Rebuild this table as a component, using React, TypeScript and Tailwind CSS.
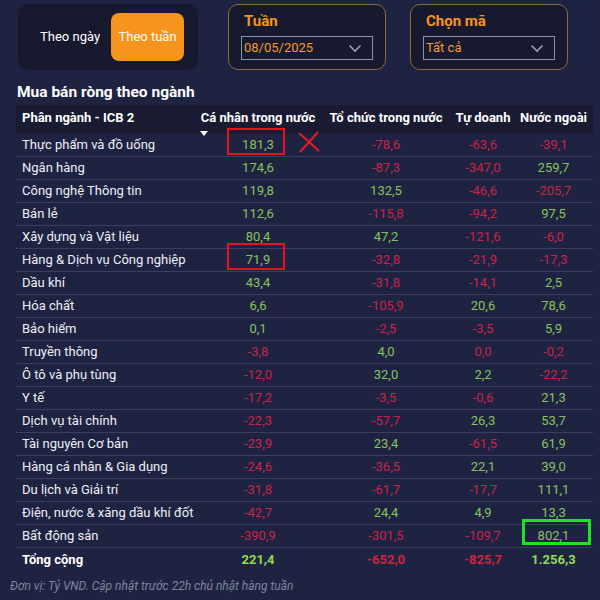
import React from "react";

type Row = { name: string; v: number[] };

const ROWS: Row[] = [
  { name: "Thực phẩm và đồ uống", v: [181.3, -78.6, -63.6, -39.1] },
  { name: "Ngân hàng", v: [174.6, -87.3, -347.0, 259.7] },
  { name: "Công nghệ Thông tin", v: [119.8, 132.5, -46.6, -205.7] },
  { name: "Bán lẻ", v: [112.6, -115.8, -94.2, 97.5] },
  { name: "Xây dựng và Vật liệu", v: [80.4, 47.2, -121.6, -6.0] },
  { name: "Hàng & Dịch vụ Công nghiệp", v: [71.9, -32.8, -21.9, -17.3] },
  { name: "Dầu khí", v: [43.4, -31.8, -14.1, 2.5] },
  { name: "Hóa chất", v: [6.6, -105.9, 20.6, 78.6] },
  { name: "Bảo hiểm", v: [0.1, -2.5, -3.5, 5.9] },
  { name: "Truyền thông", v: [-3.8, 4.0, 0.0, -0.2] },
  { name: "Ô tô và phụ tùng", v: [-12.0, 32.0, 2.2, -22.2] },
  { name: "Y tế", v: [-17.2, -3.5, -0.6, 21.3] },
  { name: "Dịch vụ tài chính", v: [-22.3, -57.7, 26.3, 53.7] },
  { name: "Tài nguyên Cơ bản", v: [-23.9, 23.4, -61.5, 61.9] },
  { name: "Hàng cá nhân & Gia dụng", v: [-24.6, -36.5, 22.1, 39.0] },
  { name: "Du lịch và Giải trí", v: [-31.8, -61.7, -17.7, 111.1] },
  { name: "Điện, nước & xăng dầu khí đốt", v: [-42.7, 24.4, 4.9, 13.3] },
  { name: "Bất động sản", v: [-390.9, -301.5, -109.7, 802.1] },
];

const TOTAL = ["221,4", "-652,0", "-825,7", "1.256,3"];

const fmt = (n: number) => {
  const s = Math.abs(n).toFixed(1).replace(".", ",");
  return n < 0 ? "-" + s : s;
};

const color = (n: number) => (n > 0 ? "text-[#86c35a]" : "text-[#c92345]");

const Chevron = () => (
  <svg width="14" height="9" viewBox="0 0 14 9" fill="none">
    <path d="M1.5 1.5 L7 7 L12.5 1.5" stroke="#9aa0b8" strokeWidth="1.6" />
  </svg>
);

function Picker({ label, value }: { label: string; value: string }) {
  return (
    <div className="w-[158px] h-[66px] rounded-[10px] border border-[#8a6b40] bg-[#171a2f] px-[12px] pt-[7px]">
      <div className="text-[15px] font-bold text-[#f7941d] leading-[18px] pl-[3px]">{label}</div>
      <div className="mt-[6px] h-[24px] border-[1.5px] border-[#8b93b5] flex items-center justify-between pl-[2px] pr-[10px]">
        <span className="text-[13px] text-[#f39a2a]">{value}</span>
        <Chevron />
      </div>
    </div>
  );
}

export default function App() {
  return (
    <div className="w-[600px] h-[600px] bg-[#1f2342] overflow-hidden font-['Roboto','Liberation_Sans',sans-serif] text-white">
      {/* filter bar */}
      <div className="flex pt-[4px] pl-[18px]">
        <div className="w-[180px] h-[66px] rounded-[9px] bg-[#171a2f] flex items-center pl-[22px] gap-[11px]">
          <span className="text-[13px] whitespace-nowrap">Theo ngày</span>
          <button className="w-[73px] h-[48px] rounded-[8px] bg-[#f7941d] text-[13px] text-white whitespace-nowrap">
            Theo tuần
          </button>
        </div>
        <div className="ml-[30px]">
          <Picker label="Tuần" value="08/05/2025" />
        </div>
        <div className="ml-[24px]">
          <Picker label="Chọn mã" value="Tất cả" />
        </div>
      </div>

      <div className="pl-[17px] mt-[13px] text-[15.5px] font-bold leading-[18px]">Mua bán ròng theo ngành</div>

      {/* table */}
      <div className="ml-[16px] w-[577px] mt-[4px]">
        <div className="grid grid-cols-[180px_124px_132px_62px_79px] bg-[#181b31] h-[29px] text-[13px] font-bold whitespace-nowrap pt-[3px]">
          <div className="pl-[6px]">Phân ngành - ICB 2</div>
          <div className="flex flex-col items-center">
            <span>Cá nhân trong nước</span>
            <svg width="8" height="5" viewBox="0 0 8 5" className="self-start ml-[4px] mt-[3px]">
              <path d="M0 0 H8 L4 5 Z" fill="#ffffff" />
            </svg>
          </div>
          <div className="text-center">Tổ chức trong nước</div>
          <div className="text-center">Tự doanh</div>
          <div className="text-center">Nước ngoài</div>
        </div>

        {ROWS.map((r, i) => (
          <div
            key={r.name}
            className="grid grid-cols-[180px_124px_132px_62px_79px] h-[23px] items-center text-[13px] border-b border-[#3a3f5e] whitespace-nowrap"
          >
            <div className="pl-[6px] text-[#eef0f6]">{r.name}</div>
            {r.v.map((n, j) => (
              <div key={j} className={`text-center relative ${color(n)}`}>
                {fmt(n)}
                {j === 0 && (i === 0 || i === 5) && (
                  <div className="absolute left-[31px] top-[-7px] w-[58px] h-[27px] border-[2.5px] border-[#e3141c]" />
                )}
                {j === 0 && i === 0 && (
                  <svg width="24" height="22" viewBox="0 0 24 22" className="absolute left-[101px] top-[-4px]">
                    <path d="M2 2 L22 20 M21 1 L3 21" stroke="#ea1a22" strokeWidth="2" fill="none" />
                  </svg>
                )}
                {j === 3 && i === 17 && (
                  <div className="absolute left-[8px] top-[-7px] w-[69px] h-[26px] border-[3px] border-[#22e022]" />
                )}
              </div>
            ))}
          </div>
        ))}

        <div className="grid grid-cols-[180px_124px_132px_62px_79px] h-[23px] items-center text-[13px] font-bold whitespace-nowrap">
          <div className="pl-[6px]">Tổng cộng</div>
          <div className="text-center text-[#8fdc50]">{TOTAL[0]}</div>
          <div className="text-center text-[#d0213f]">{TOTAL[1]}</div>
          <div className="text-center text-[#d0213f]">{TOTAL[2]}</div>
          <div className="text-center text-[#8fdc50]">{TOTAL[3]}</div>
        </div>
      </div>

      <div className="pl-[10px] mt-[6px] text-[12px] italic text-[#7f849e]">
        Đơn vị: Tỷ VND. Cập nhật trước 22h chủ nhật hàng tuần
      </div>
    </div>
  );
}
